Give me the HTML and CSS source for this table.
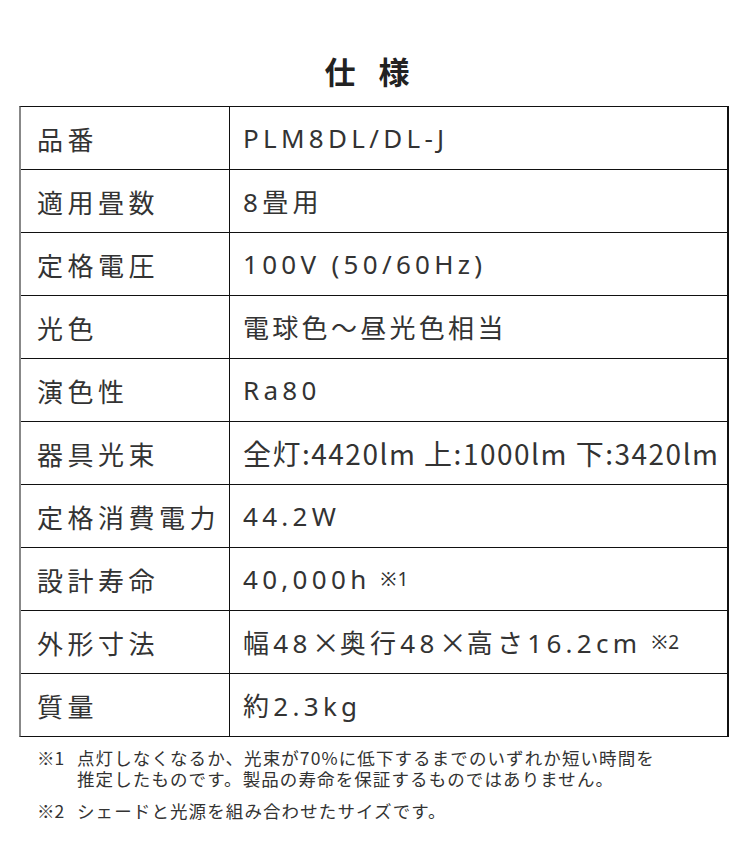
FILE: index.html
```html
<!DOCTYPE html>
<html lang="ja">
<head>
<meta charset="utf-8">
<title>仕様</title>
<link rel="stylesheet" href="styles.css">
</head>
<body>
<div class="page">
  <h1 class="title">仕　様</h1>
  <div class="spec">
    <div class="row"><div class="label">品番</div><div class="value">PLM8DL/DL-J</div></div>
    <div class="row"><div class="label">適用畳数</div><div class="value">8畳用</div></div>
    <div class="row"><div class="label">定格電圧</div><div class="value">100V (50/60Hz)</div></div>
    <div class="row"><div class="label">光色</div><div class="value value-ja">電球色～昼光色相当</div></div>
    <div class="row"><div class="label">演色性</div><div class="value">Ra80</div></div>
    <div class="row"><div class="label">器具光束</div><div class="value value-tight">全灯:4420lm 上:1000lm 下:3420lm</div></div>
    <div class="row"><div class="label">定格消費電力</div><div class="value">44.2W</div></div>
    <div class="row"><div class="label">設計寿命</div><div class="value">40,000h <span class="note">※1</span></div></div>
    <div class="row"><div class="label">外形寸法</div><div class="value">幅48<span class="times">×</span>奥行48<span class="times">×</span>高さ16.2cm <span class="note">※2</span></div></div>
    <div class="row"><div class="label">質量</div><div class="value">約2.3kg</div></div>
  </div>
  <div class="notes">
    <div class="fn"><span class="mark">※1</span><span class="fn-text"><span class="fn-line">点灯しなくなるか、光束が70%に低下するまでのいずれか短い時間を</span><span class="fn-line">推定したものです。製品の寿命を保証するものではありません。</span></span></div>
    <div class="fn"><span class="mark">※2</span><span class="fn-text"><span class="fn-line">シェードと光源を組み合わせたサイズです。</span></span></div>
  </div>
</div>
</body>
</html>
```
FILE: styles.css
```css
* { box-sizing: border-box; }
html, body {
  margin: 0;
  padding: 0;
  background: #fff;
}
body {
  font-family: "Noto Sans CJK JP", "Noto Sans", sans-serif;
  color: #333;
}
.page {
  width: 750px;
  height: 856px;
  padding-top: 51px;
}
.title {
  margin: 0;
  height: 40px;
  line-height: 40px;
  font-size: 31px;
  font-weight: 700;
  text-align: center;
  letter-spacing: -4px;
  padding-right: 20px;
  color: #222;
}
.spec {
  margin: 15px 21px 0 19px;
  border-top: 1px solid #111;
  border-right: 2px solid #111;
  border-bottom: 1px solid #111;
  border-left: 2px solid #888;
}
.row {
  display: grid;
  grid-template-columns: 208px 1fr;
  height: 63px;
  border-bottom: 1px solid #111;
}
.row:last-child {
  border-bottom: none;
  height: 62px;
}
.label {
  display: flex;
  align-items: center;
  padding-left: 16px;
  font-size: 26px;
  letter-spacing: 4.5px;
  white-space: nowrap;
}
.value {
  display: flex;
  align-items: center;
  border-left: 1px solid #111;
  padding-left: 13px;
  font-family: "Noto Sans", "Noto Sans CJK JP", sans-serif;
  font-size: 26px;
  letter-spacing: 4.3px;
  white-space: nowrap;
}
.value-ja {
  letter-spacing: 3.3px;
}
.value-tight {
  font-family: "Noto Sans CJK JP", sans-serif;
  letter-spacing: 1.5px;
  font-size: 28px;
}
.times {
  font-family: "Noto Sans CJK JP", sans-serif;
  font-size: 28px;
  letter-spacing: 0;
}
.note {
  font-size: 19px;
  letter-spacing: 1px;
  margin-left: 10px;
}
.notes {
  padding: 10px 0 0 37px;
  font-size: 17.5px;
  line-height: 21px;
  color: #333;
}
.fn {
  display: flex;
  margin-bottom: 11px;
}
.mark {
  width: 40px;
  flex: none;
  line-height: 21px;
}
.fn-text {
  display: flex;
  flex-direction: column;
  letter-spacing: 1.1px;
}
.fn-line {
  display: block;
  height: 21px;
  line-height: 21px;
  white-space: nowrap;
}
```
